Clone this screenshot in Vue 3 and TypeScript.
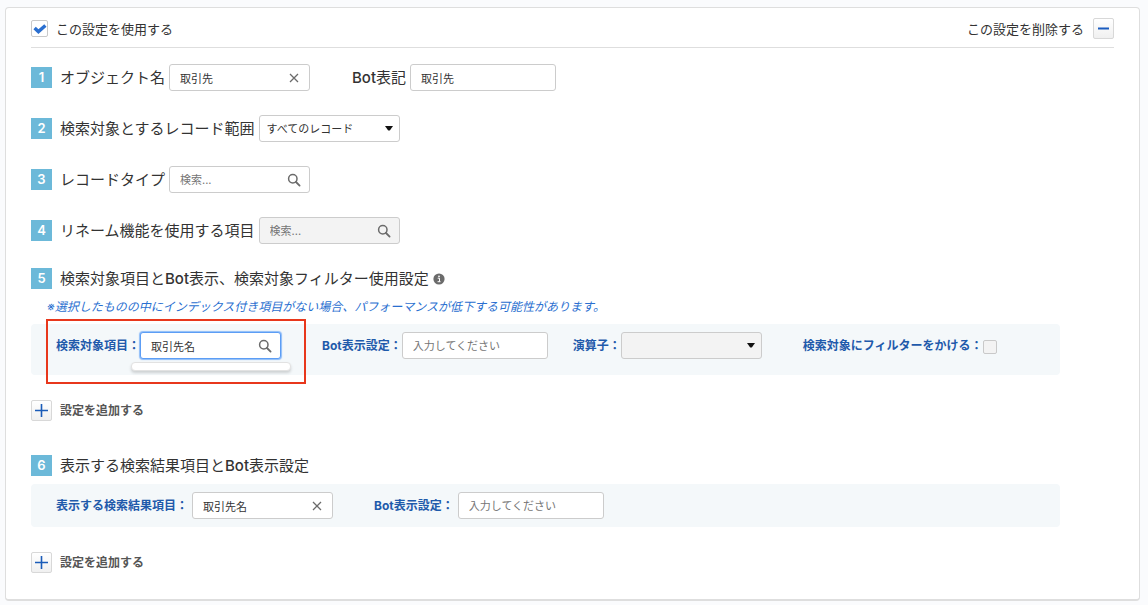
<script setup lang="ts">
import { ref } from 'vue'

const enabled = ref<boolean>(true)
const objectName = ref<string>('取引先')
const botName = ref<string>('取引先')
const range = ref<string>('すべてのレコード')
const recordType = ref<string>('')
const rename = ref<string>('')
const searchField = ref<string>('取引先名')
const searchBotLabel = ref<string>('')
const operator = ref<string>('')
const filtered = ref<boolean>(false)
const resultField = ref<string>('取引先名')
const resultBotLabel = ref<string>('')
</script>

<template>
  <main class="card">
    <header class="top">
      <label class="use">
        <span class="tick">
          <input v-model="enabled" type="checkbox" class="check" />
          <svg v-if="enabled" class="tick-mark" viewBox="0 0 14 12" aria-hidden="true">
            <path d="M1.6 5 5.4 8.6 12.4 2.4" fill="none" stroke="#2a6fd0" stroke-width="3.4" />
          </svg>
        </span>
        <span>この設定を使用する</span>
      </label>
      <div class="remove">
        <span id="remove-label">この設定を削除する</span>
        <button type="button" class="square" aria-labelledby="remove-label">
          <svg width="13" height="13" viewBox="0 0 13 13"><path d="M1 6.5h11" stroke="#1b5cc0" stroke-width="2" /></svg>
        </button>
      </div>
    </header>

    <section class="rows">
      <div class="row">
        <span class="num">1</span>
        <label class="title" for="object-name">オブジェクト名</label>
        <div class="box">
          <input id="object-name" v-model="objectName" type="text" />
          <button type="button" class="icon" aria-label="クリア" @click="objectName = ''">
            <svg width="14" height="14" viewBox="0 0 14 14"><path d="M3 3l8 8M11 3l-8 8" stroke="#6b6b6b" stroke-width="1.3" /></svg>
          </button>
        </div>
        <label class="title second" for="bot-name"><span class="latin">Bot</span>表記</label>
        <div class="box wide"><input id="bot-name" v-model="botName" type="text" /></div>
      </div>

      <div class="row">
        <span class="num">2</span>
        <label class="title" for="range">検索対象とするレコード範囲</label>
        <div class="box">
          <select id="range" v-model="range"><option>すべてのレコード</option></select>
          <svg class="caret" viewBox="0 0 8 5" aria-hidden="true"><path d="M0 0h8L5 4.2Q4 5 3 4.2Z" fill="#111" /></svg>
        </div>
      </div>

      <div class="row">
        <span class="num">3</span>
        <label class="title" for="record-type">レコードタイプ</label>
        <div class="box">
          <input id="record-type" v-model="recordType" type="text" placeholder="検索..." />
          <button type="button" class="icon" aria-label="検索">
            <svg width="14" height="14" viewBox="0 0 14 14"><circle cx="5.8" cy="5.8" r="4.2" fill="none" stroke="#6b6b6b" stroke-width="1.5" /><path d="M9 9l3.6 3.6" stroke="#6b6b6b" stroke-width="1.8" stroke-linecap="round" /></svg>
          </button>
        </div>
      </div>

      <div class="row">
        <span class="num">4</span>
        <label class="title" for="rename">リネーム機能を使用する項目</label>
        <div class="box off">
          <input id="rename" v-model="rename" type="text" placeholder="検索..." disabled />
          <button type="button" class="icon" aria-label="検索" disabled>
            <svg width="14" height="14" viewBox="0 0 14 14"><circle cx="5.8" cy="5.8" r="4.2" fill="none" stroke="#6b6b6b" stroke-width="1.5" /><path d="M9 9l3.6 3.6" stroke="#6b6b6b" stroke-width="1.8" stroke-linecap="round" /></svg>
          </button>
        </div>
      </div>
    </section>

    <section class="group">
      <div class="row">
        <span class="num">5</span>
        <h2 class="title">検索対象項目と<span class="latin">Bot</span>表示、検索対象フィルター使用設定</h2>
        <svg class="info" viewBox="0 0 12 12" aria-hidden="true">
          <circle cx="6" cy="6" r="5.6" fill="#6b6b6b" />
          <circle cx="6" cy="3.3" r="0.9" fill="#fff" />
          <path d="M4.7 5.2h1.8v3.3M4.6 8.7h2.9" fill="none" stroke="#fff" stroke-width="1" />
        </svg>
      </div>
      <p class="note">※選択したものの中にインデックス付き項目がない場合、パフォーマンスが低下する可能性があります。</p>
      <div class="panel tall">
        <div class="field marked">
          <label for="search-field">検索対象項目：</label>
          <div class="box active">
            <input id="search-field" v-model="searchField" type="text" />
            <button type="button" class="icon" aria-label="検索">
              <svg width="14" height="14" viewBox="0 0 14 14"><circle cx="5.8" cy="5.8" r="4.2" fill="none" stroke="#6b6b6b" stroke-width="1.5" /><path d="M9 9l3.6 3.6" stroke="#6b6b6b" stroke-width="1.8" stroke-linecap="round" /></svg>
            </button>
            <div class="popup"></div>
          </div>
        </div>
        <div class="field">
          <label for="search-bot">Bot表示設定：</label>
          <div class="box wide"><input id="search-bot" v-model="searchBotLabel" type="text" placeholder="入力してください" /></div>
        </div>
        <div class="field near">
          <label for="operator">演算子：</label>
          <div class="box off">
            <select id="operator" v-model="operator" disabled><option value=""></option></select>
            <svg class="caret" viewBox="0 0 8 5" aria-hidden="true"><path d="M0 0h8L5 4.2Q4 5 3 4.2Z" fill="#111" /></svg>
          </div>
        </div>
        <div class="field">
          <label for="filter">検索対象にフィルターをかける：</label>
          <input id="filter" v-model="filtered" type="checkbox" class="check small" disabled />
        </div>
      </div>
      <button type="button" class="add">
        <span class="square">
          <svg width="13" height="13" viewBox="0 0 13 13"><path d="M0 6.5h13M6.5 0v13" stroke="#1b5cb8" stroke-width="1.6" /></svg>
        </span>
        <span>設定を追加する</span>
      </button>
    </section>

    <section class="group last">
      <div class="row">
        <span class="num">6</span>
        <h2 class="title">表示する検索結果項目と<span class="latin">Bot</span>表示設定</h2>
      </div>
      <div class="panel">
        <div class="field spaced">
          <label for="result-field">表示する検索結果項目：</label>
          <div class="box">
            <input id="result-field" v-model="resultField" type="text" />
            <button type="button" class="icon" aria-label="クリア" @click="resultField = ''">
              <svg width="14" height="14" viewBox="0 0 14 14"><path d="M3 3l8 8M11 3l-8 8" stroke="#6b6b6b" stroke-width="1.3" /></svg>
            </button>
          </div>
        </div>
        <div class="field spaced">
          <label for="result-bot">Bot表示設定：</label>
          <div class="box wide"><input id="result-bot" v-model="resultBotLabel" type="text" placeholder="入力してください" /></div>
        </div>
      </div>
      <button type="button" class="add">
        <span class="square">
          <svg width="13" height="13" viewBox="0 0 13 13"><path d="M0 6.5h13M6.5 0v13" stroke="#1b5cb8" stroke-width="1.6" /></svg>
        </span>
        <span>設定を追加する</span>
      </button>
    </section>
  </main>
</template>

<style>
body {
  background: #fafbfd;
}
</style>

<style scoped>
.card,
.card * {
  box-sizing: border-box;
}
.card {
  margin: 7px 8px 4px 5px;
  padding: 10px 25px 26px;
  background: #fff;
  border: 1px solid #dedede;
  border-bottom-width: 2px;
  border-radius: 4px;
  color: #333;
  font-family: Inter, "Noto Sans CJK JP", sans-serif;
  font-size: 13px;
  line-height: 20px;
}
button,
input,
select {
  font: inherit;
  color: inherit;
}
.top {
  display: flex;
  justify-content: space-between;
  align-items: center;
  height: 30px;
  padding-bottom: 8px;
  border-bottom: 1px solid #dedede;
}
.use,
.remove {
  display: flex;
  align-items: center;
  gap: 8px;
}
.remove {
  gap: 9px;
}
.tick {
  position: relative;
  display: flex;
}
.check {
  appearance: none;
  width: 17px;
  height: 17px;
  margin: 0;
  background: #fff;
  border: 1px solid #c9c9c9;
  border-radius: 2px;
}
.check.small {
  width: 14px;
  height: 14px;
  margin-top: 3px;
  background: #f3f3f3;
}
.tick-mark {
  position: absolute;
  top: 3px;
  left: 2px;
  width: 14px;
  height: 12px;
  pointer-events: none;
}
.square {
  display: flex;
  align-items: center;
  justify-content: center;
  flex: none;
  width: 21px;
  height: 21px;
  padding: 0;
  border: 1px solid #d8d8d8;
  border-radius: 2px;
  background: linear-gradient(#fff, #f0f0f0);
}
.rows {
  display: flex;
  flex-direction: column;
  gap: 24px;
  padding-top: 16px;
}
.row {
  display: flex;
  align-items: center;
}
.num {
  flex: none;
  width: 21px;
  height: 21px;
  margin-right: 8px;
  background: #6cb9d9;
  color: #fff;
  font-size: 13px;
  font-weight: 600;
  line-height: 21px;
  text-align: center;
}
.title {
  margin: 0 4px 0 0;
  font-size: 15px;
  font-weight: 400;
  line-height: 20px;
  white-space: nowrap;
}
.latin {
  font-weight: 500;
}
.second {
  margin-left: 42px;
}
.box {
  position: relative;
  display: flex;
  align-items: center;
  flex: none;
  width: 141px;
  height: 27px;
  background: #fff;
  border: 1px solid #ccc;
  border-radius: 3px;
  font-size: 11px;
}
.wide {
  width: 146px;
}
.off {
  background: #f3f3f3;
}
.active {
  border-color: #5c9df5;
  box-shadow: 0 0 1px 1px #8dbcf8;
}
.box input {
  flex: 1;
  min-width: 0;
  height: 100%;
  padding: 0 0 0 10px;
  border: 0;
  outline: 0;
  background: transparent;
}
.box input::placeholder {
  color: #757575;
  opacity: 1;
}
.box select {
  appearance: none;
  width: 100%;
  height: 100%;
  padding: 0 24px 0 7px;
  border: 0;
  outline: 0;
  background: transparent;
}
.caret {
  position: absolute;
  right: 6px;
  width: 8px;
  height: 5px;
  pointer-events: none;
}
.icon {
  display: flex;
  flex: none;
  padding: 0;
  margin-right: 8px;
  border: 0;
  background: transparent;
}
.group {
  padding-top: 24px;
}
.info {
  width: 12px;
  height: 12px;
}
.note {
  margin: 8px 0 0 16px;
  color: #2a6fd0;
  font-size: 12px;
  font-style: italic;
  line-height: 20px;
}
.panel {
  display: flex;
  gap: 41px;
  width: 95%;
  margin-top: 8px;
  padding: 8px 25px;
  background: #f4f8fa;
  border-radius: 4px;
}
.tall {
  margin-top: 7px;
  padding-bottom: 16px;
}
.field {
  position: relative;
  display: flex;
  align-items: center;
  color: #1f5aab;
  font-size: 12px;
  font-weight: 700;
  white-space: nowrap;
}
.field .box {
  color: #333;
  font-weight: 400;
}
.near {
  margin-left: -16px;
}
.spaced {
  gap: 4px;
}
.marked::after {
  content: "";
  position: absolute;
  inset: -13px -25px -25px -10px;
  border: 2px solid #e8371c;
  pointer-events: none;
}
.popup {
  position: absolute;
  top: 29px;
  left: -10px;
  width: 160px;
  height: 9px;
  background: #fff;
  border: 1px solid #e2e2e2;
  border-radius: 4px;
  box-shadow: 0 2px 3px rgba(0, 0, 0, 0.16);
}
.add {
  display: flex;
  align-items: center;
  gap: 8px;
  margin-top: 25px;
  padding: 0;
  border: 0;
  background: transparent;
  color: #555;
  font-size: 12px;
  font-weight: 700;
}
.last {
  padding-top: 34px;
}
</style>
